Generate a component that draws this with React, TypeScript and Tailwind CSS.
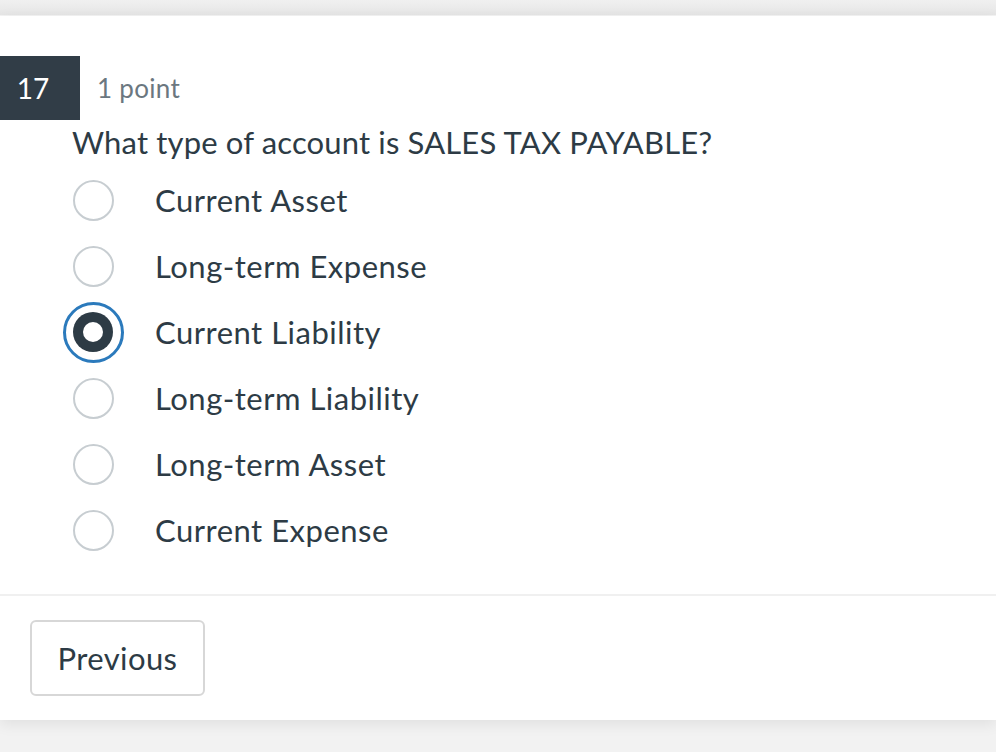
import React from "react";

const options = [
  "Current Asset",
  "Long-term Expense",
  "Current Liability",
  "Long-term Liability",
  "Long-term Asset",
  "Current Expense",
];

export default function App() {
  const selected = 2;
  return (
    <div
      className="w-[996px] h-[752px] bg-[#f2f2f2] flex flex-col overflow-hidden"
      style={{ fontFamily: "Lato, 'Open Sans', sans-serif" }}
    >
      <div className="h-[15px] bg-gradient-to-b from-[#f0f0f0] to-[#e6e6e6] shrink-0" />
      <div className="h-[1px] bg-[#f4f4f4] shrink-0" />
      <div className="bg-white flex flex-col pt-[40px] pb-[24px] shadow-[0_4px_14px_rgba(0,0,0,0.08)]">
        <div className="flex items-center h-[64px]">
          <div className="w-[80px] h-[64px] bg-[#313d47] text-white text-[28px] flex items-center justify-center pr-[14px]">
            17
          </div>
          <div className="ml-[17px] text-[26px] tracking-[0.3px] text-[#6b7780] leading-none">1 point</div>
        </div>
        <div className="ml-[72px] mt-[4px] text-[31px] leading-[36px] text-[#2d3b45] tracking-[0.15px]">
          What type of account is SALES TAX PAYABLE?
        </div>
        <div className="mt-[7px] flex flex-col">
          {options.map((o, i) => (
            <div key={o} className="h-[66px] flex items-center">
              <div className="w-[62px] ml-[62px] flex items-center justify-center">
                {i === selected ? (
                  <div className="w-[61px] h-[61px] rounded-full border-[3px] border-[#2b7abc] flex items-center justify-center">
                    <div className="w-[40px] h-[40px] rounded-full bg-[#2d3b45] flex items-center justify-center">
                      <div className="w-[20px] h-[20px] rounded-full bg-white" />
                    </div>
                  </div>
                ) : (
                  <div className="w-[41px] h-[41px] rounded-full border-2 border-[#c7cdd1] bg-white" />
                )}
              </div>
              <div className="ml-[31px] text-[31px] tracking-[0.5px] text-[#2d3b45] leading-none">{o}</div>
            </div>
          ))}
        </div>
        <div className="mt-[31px] h-[2px] bg-[#f0f0f0]" />
        <div className="mt-[24px] ml-[30px]">
          <button className="w-[175px] h-[76px] rounded-[6px] border-2 border-[#d7d7d7] bg-white text-[31px] tracking-[0.4px] text-[#2d3b45]">
            Previous
          </button>
        </div>
      </div>
    </div>
  );
}
